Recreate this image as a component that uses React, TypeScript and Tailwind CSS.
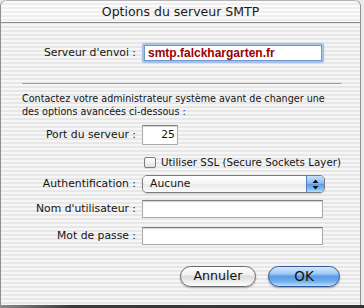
import React from "react";

const stripes =
  "bg-[repeating-linear-gradient(180deg,#f6f6f6_0px,#f6f6f6_2px,#e7e7e7_2px,#e7e7e7_4px)]";

function Label({ children }: { children: React.ReactNode }) {
  return (
    <div className="w-[135px] shrink-0 text-right text-[10.8px] leading-[14px] text-[#141414]">
      {children}
    </div>
  );
}

function Field({ h = 18, w = 181, children }: { h?: number; w?: number; children?: React.ReactNode }) {
  return (
    <div
      className={`ml-[6px] bg-white border border-[#a9a9a9] border-t-[#7c7c7c] shadow-[inset_0_1px_1px_rgba(0,0,0,0.18)] flex items-center ${
        h === 20 ? "h-[20px]" : "h-[18px]"
      } ${w === 36 ? "w-[36px]" : "w-[181px]"}`}
    >
      {children}
    </div>
  );
}

export default function App() {
  return (
    <div className="w-[364px] h-[308px] flex flex-col bg-[#ececec] font-['DejaVu_Sans','Liberation_Sans',sans-serif] overflow-hidden">
      <div className="flex h-[305px]">
        <div className={`w-[361px] h-[305px] flex flex-col border-x border-[#8f8f8f] rounded-t-[6px] overflow-hidden ${stripes}`}>
          {/* Title bar */}
          <div className="h-[23px] shrink-0 flex items-center justify-center border-t border-[#b5b5b5] border-b border-b-[#8a8a8a] rounded-t-[6px] bg-[repeating-linear-gradient(180deg,#fbfbfb_0px,#fbfbfb_2px,#eeeeee_2px,#eeeeee_4px)]">
            <span className="text-[12.5px] leading-none text-[#1a1a1a] pt-[1px]">Options du serveur SMTP</span>
          </div>

          {/* Server row */}
          <div className="mt-[20px] flex items-center">
            <Label>Serveur d'envoi :</Label>
            <div className="ml-[6px] w-[182px] h-[20px] rounded-[3px] border-[2px] border-[#a2c0e8] shadow-[0_0_1px_#7fa3d8]">
              <div className="w-full h-full bg-white border border-[#7496cc] flex items-center pl-[3px]">
                <span className="font-['Liberation_Sans',Arial,sans-serif] font-bold text-[12px] leading-none text-[#9a0000]">smtp.falckhargarten.fr</span>
              </div>
            </div>
          </div>

          {/* Separator */}
          <div className="mt-[20px] ml-[21px] w-[319px] h-px bg-[#9c9c9c]" />

          {/* Paragraph */}
          <p className="mt-[8px] ml-[21px] text-[9.6px] leading-[13px] text-[#141414]">
            Contactez votre administrateur système avant de changer une
            <br />
            des options avancées ci-dessous :
          </p>

          {/* Port */}
          <div className="mt-[7px] flex items-center">
            <Label>Port du serveur :</Label>
            <Field h={20} w={36}>
              <span className="w-full text-right pr-[2px] text-[10.8px] leading-none text-[#141414]">25</span>
            </Field>
          </div>

          {/* SSL checkbox */}
          <div className="mt-[12px] h-[11px] flex items-center pl-[143px]">
            <div className="w-[12px] h-[11px] rounded-[2px] border border-[#7d7d7d] bg-[linear-gradient(180deg,#ffffff,#e2e2e2)] shadow-[0_1px_0_rgba(0,0,0,0.08)]" />
            <span className="ml-[5px] text-[10.3px] leading-none text-[#141414]">Utiliser SSL (Secure Sockets Layer)</span>
          </div>

          {/* Auth popup */}
          <div className="mt-[7px] flex items-center">
            <Label>Authentification :</Label>
            <div className="ml-[6px] w-[183px] h-[18px] flex rounded-[5px] border border-[#7a7a7a] overflow-hidden shadow-[0_1px_1px_rgba(0,0,0,0.15)]">
              <div className="flex-1 flex items-center pl-[7px] bg-[linear-gradient(180deg,#ffffff_0%,#f4f4f4_50%,#e9e9e9_51%,#fafafa_100%)]">
                <span className="text-[10.8px] leading-none text-[#141414]">Aucune</span>
              </div>
              <div className="w-[18px] flex items-center justify-center border-l border-[#5a7fc0] bg-[linear-gradient(180deg,#c9e0fa_0%,#8fbdf1_45%,#5d9be6_52%,#7fb9f3_80%,#b7e0ff_100%)]">
                <svg width="7" height="11" viewBox="0 0 7 11">
                  <path d="M3.5 0.5 L6.5 4 L0.5 4 Z" fill="#111" />
                  <path d="M3.5 10.5 L6.5 7 L0.5 7 Z" fill="#111" />
                </svg>
              </div>
            </div>
          </div>

          {/* User */}
          <div className="mt-[7px] flex items-center">
            <Label>Nom d'utilisateur :</Label>
            <Field />
          </div>

          {/* Password */}
          <div className="mt-[9px] flex items-center">
            <Label>Mot de passe :</Label>
            <Field />
          </div>

          {/* Buttons */}
          <div className="mt-[21px] flex justify-end gap-[12px] pr-[20px]">
            <button className="w-[76px] h-[21px] rounded-full border border-[#6a6a6a] bg-[linear-gradient(180deg,#ffffff_0%,#f1f1f1_40%,#dcdcdc_50%,#ececec_75%,#ffffff_100%)] shadow-[0_1px_2px_rgba(0,0,0,0.3)] flex items-center justify-center">
              <span className="text-[12.6px] leading-none text-[#111]">Annuler</span>
            </button>
            <button className="w-[72px] h-[21px] rounded-full border border-[#34589a] bg-[linear-gradient(180deg,#d6e8fb_0%,#9ec9f4_35%,#5b9ae4_50%,#6eaef0_75%,#b5e2ff_100%)] shadow-[0_1px_2px_rgba(0,0,0,0.35)] flex items-center justify-center">
              <span className="text-[13.5px] leading-none text-[#111]">OK</span>
            </button>
          </div>
        </div>
      </div>
      <div className="h-[3px] bg-[linear-gradient(90deg,#8a8a8a,#3a3a3a_20%,#333333)]" />
    </div>
  );
}
